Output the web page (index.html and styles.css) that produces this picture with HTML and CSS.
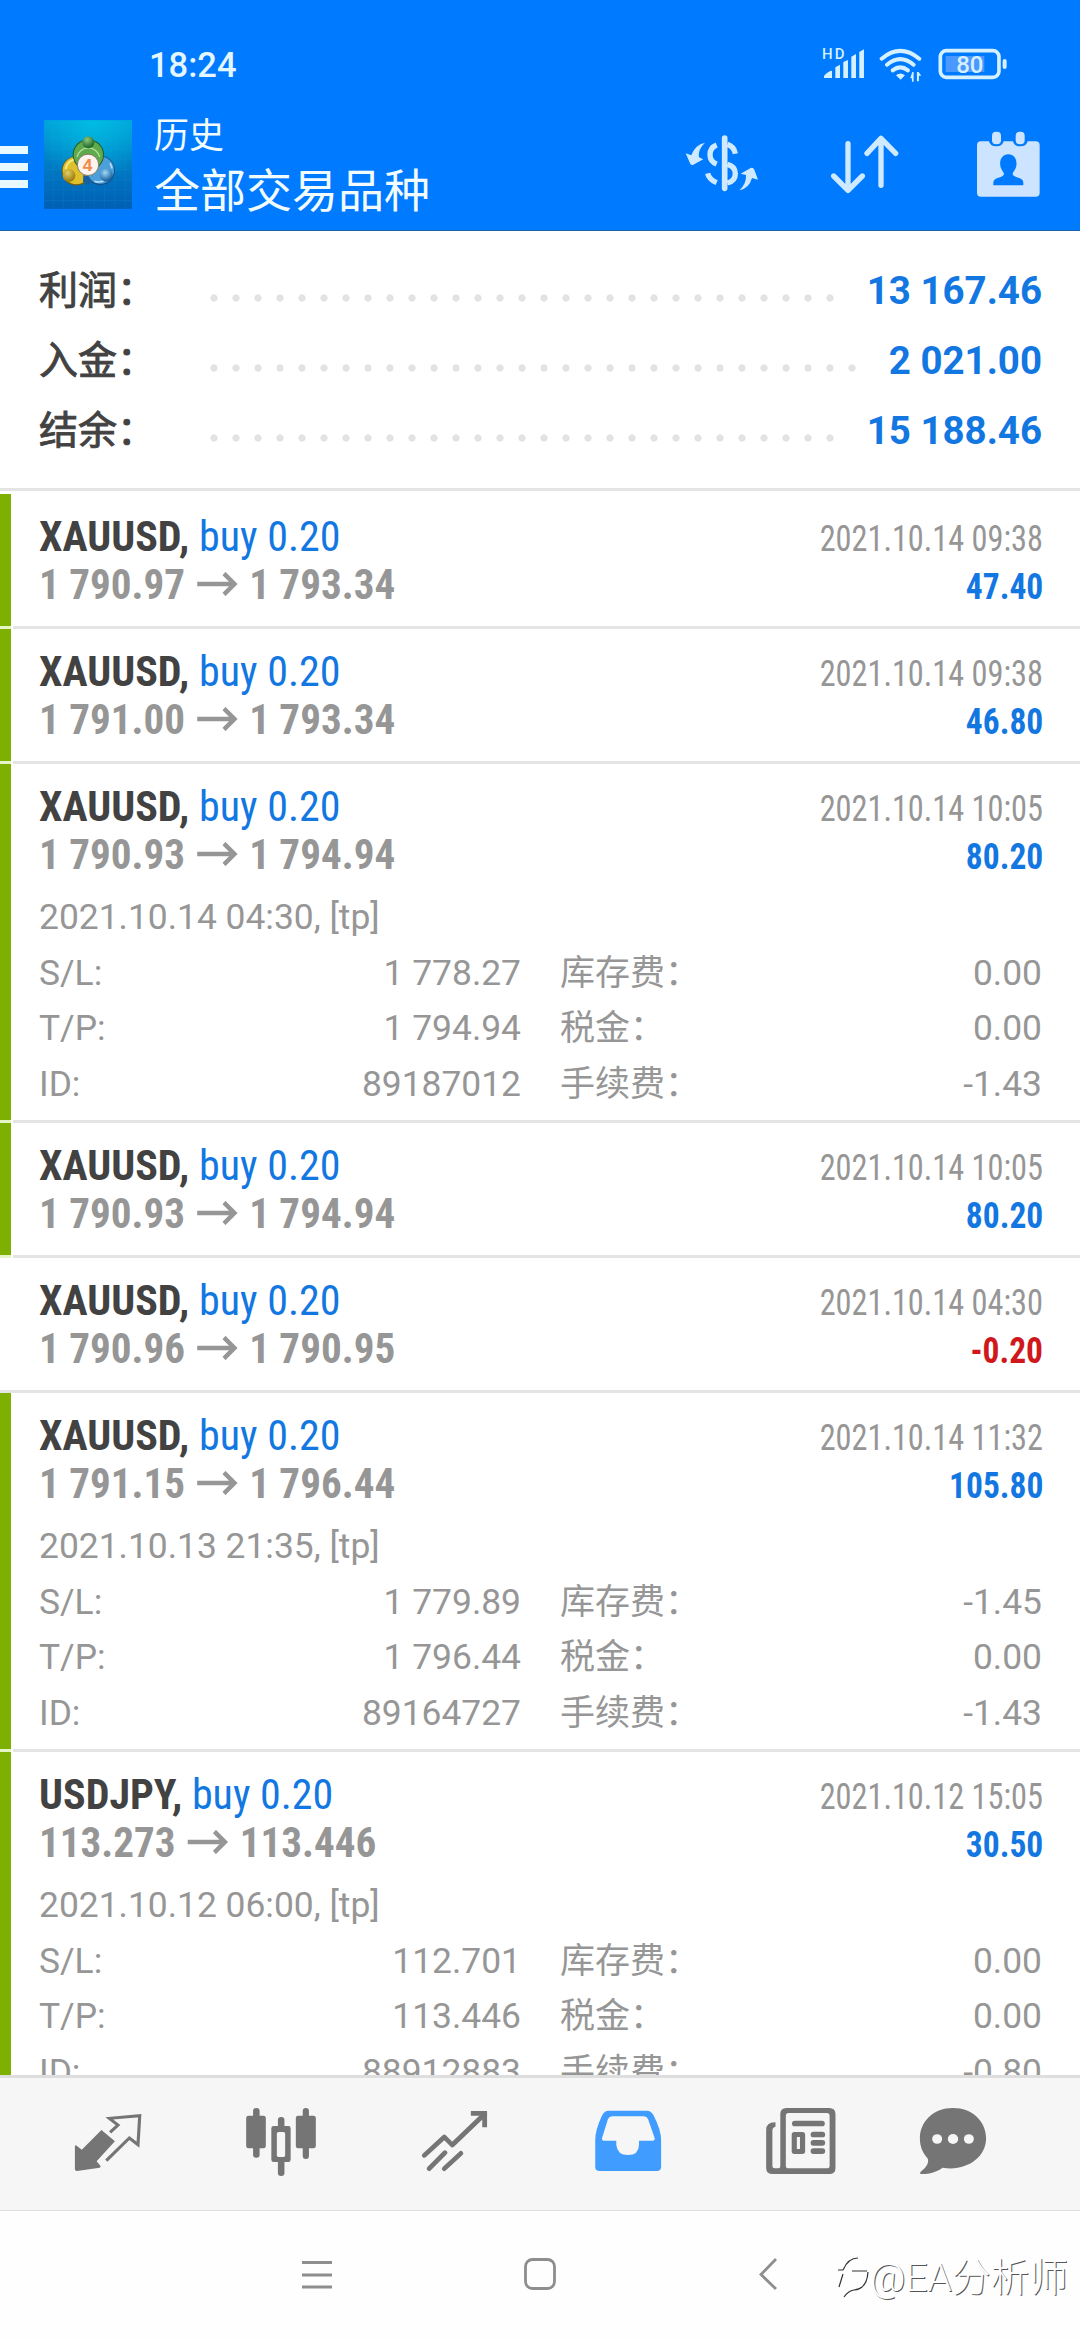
FILE: index.html
```html
<!DOCTYPE html>
<html lang="zh-CN">
<head>
<meta charset="utf-8">
<title>历史</title>
<link rel="stylesheet" href="styles.css">
</head>
<body>
<div class="screen">
  <header class="header">
    <div class="status">
      <span class="clock">18:24</span>
      <div class="status-icons">
        <svg class="signal" viewBox="546 138 130 108">
          <text x="546" y="177" font-size="45" font-weight="500" textLength="68">HD</text>
          <path d="M552 234v-6q10-14 24-16v22zM586 234v-32l14-8v40zM610 234v-48l14-6v54zM634 234v-64l14-8v72zM658 234v-78l14-8v86z"/>
        </svg>
        <svg class="wifi" viewBox="716 138 134 108">
          <g fill="none" stroke="#d5f1ff" stroke-width="12" stroke-linecap="round">
            <path d="M727 176q56-47 113 0"/><path d="M743 194q40-33 80 0"/><path d="M760 211q23-18 46 0"/>
          </g>
          <path d="M770 226q13-11 27 0l-13 13zM823 216v29h-5v-10h-5l6-19zM833 216h5l8 11h-7v17h-6z"/>
        </svg>
        <svg class="battery" viewBox="892 138 208 108">
          <rect x="915" y="168" width="116" height="48" fill="#4b98ff"/>
          <rect x="899" y="152" width="176" height="80" rx="18" fill="none" stroke="#d5f1ff" stroke-width="11"/>
          <rect x="1086" y="177" width="12" height="30" rx="6"/>
          <text x="947" y="219" font-size="72" font-weight="500" textLength="81">80</text>
        </svg>
      </div>
    </div>
    <div class="appbar">
      <svg class="menu" viewBox="0 0 28 42"><path d="M0 0h28v8H0zM0 17h28v8H0zM0 34h28v8H0z"/></svg>
      <svg class="logo" viewBox="132 31 264 266">
        <defs>
          <linearGradient id="sky" x1="0" y1="0" x2="0" y2="1"><stop offset="0" stop-color="#009fd8"/><stop offset=".5" stop-color="#007bc4"/><stop offset="1" stop-color="#005fb4"/></linearGradient>
          <radialGradient id="shine" cx=".55" cy="0" r=".7"><stop offset="0" stop-color="#00c4e4" stop-opacity=".8"/><stop offset="1" stop-color="#00c4e4" stop-opacity="0"/></radialGradient>
          <radialGradient id="green" cx=".4" cy=".3" r=".7"><stop offset="0" stop-color="#8cc77c"/><stop offset="1" stop-color="#1a6428"/></radialGradient>
          <radialGradient id="gold" cx=".4" cy=".3" r=".7"><stop offset="0" stop-color="#e2cf68"/><stop offset="1" stop-color="#98780a"/></radialGradient>
          <radialGradient id="azure" cx=".4" cy=".3" r=".7"><stop offset="0" stop-color="#9fd8f6"/><stop offset="1" stop-color="#125c9a"/></radialGradient>
        </defs>
        <rect x="132" y="31" width="264" height="266" fill="url(#sky)"/>
        <rect x="132" y="31" width="264" height="266" fill="url(#shine)"/>
        <path d="M159 31v266M190 31v266M221 31v266M252 31v266M283 31v266M314 31v266M345 31v266M376 31v266M132 55h264M132 86h264M132 117h264M132 148h264M132 179h264M132 210h264M132 241h264M132 272h264" stroke="#42a9e0" stroke-opacity=".16" stroke-width="2"/>
        <circle cx="229" cy="183" r="44" fill="#6f5d12"/>
        <circle cx="301" cy="182" r="44" fill="#174f86"/>
        <circle cx="229" cy="182" r="41" fill="#dfc02a"/>
        <circle cx="301" cy="181" r="41" fill="#4d9fdb"/>
        <circle cx="265" cy="135" r="47" fill="#1f5f2a"/>
        <circle cx="265" cy="135" r="44" fill="#5fab4c"/>
        <path d="M231 141a35 35 0 0 1 68 0" fill="none" stroke="#b9e0a4" stroke-width="4"/>
        <path d="M197 178a34 34 0 0 1 24-28" fill="none" stroke="#f6e88a" stroke-width="6"/>
        <path d="M283 214a36 36 0 0 0 30-2M330 160a34 34 0 0 1 6 16" fill="none" stroke="#b5defa" stroke-width="5"/>
        <path d="M250 196l14 0 12 18-12 12-15-10z" fill="#17609f"/>
        <circle cx="265" cy="97" r="18" fill="url(#green)"/>
        <circle cx="207" cy="197" r="19" fill="url(#gold)"/>
        <circle cx="319" cy="196" r="19" fill="url(#azure)"/>
        <circle cx="264" cy="165" r="32" fill="#fff3ee" stroke="#7d7b66" stroke-width="3"/>
        <text x="248" y="185" class="logo-digit">4</text>
      </svg>
      <div class="titles">
        <div class="title-small">历史</div>
        <div class="title-large">全部交易品种</div>
      </div>
      <div class="actions">
        <svg class="action" viewBox="126 384 240 216">
          <g fill="none" stroke="#cfeaff" stroke-width="16">
            <path d="M254 414v151" stroke-width="17" stroke-linecap="round"/>
            <path d="M230 435q-20 8-20 29 0 20 20 28M203 520q4 18 27 28"/>
            <path d="M262 433q20 6 24 28M262 493q24 6 24 28t-24 28" stroke-linecap="butt"/>
          </g>
          <path fill="#cfeaff" d="M195 428q-22 20-18 44l13 6-30 16q-7 4-10-4l-13-30 17 6q11-32 41-38zM298 571q22-20 20-46l-16-4 30-17q7-3 11 5l11 30-18-5q-9 32-38 37z"/>
        </svg>
        <svg class="action" viewBox="556 384 240 216">
          <g fill="none" stroke="#cfeaff" stroke-width="16" stroke-linecap="round" stroke-linejoin="round">
            <path d="M625 431v140M582 528l43 43 43-43M724 556V415M682 460l42-45 44 45"/>
          </g>
        </svg>
        <svg class="action" viewBox="986 384 240 216">
          <path fill="#cce4ff" d="M1022 424h24q3 15 22 15t22-15h28q3 15 22 15t22-15h24q12 0 12 12v142q0 12-12 12h-164q-12 0-12-12V436q0-12 12-12z"/>
          <rect x="1055" y="395" width="27" height="38" rx="12" fill="#cce4ff"/>
          <rect x="1126" y="395" width="27" height="38" rx="12" fill="#cce4ff"/>
          <path fill="#007aff" d="M1104 463c18 0 27 16 24 34-2 13-11 18-11 26 4 12 32 8 32 25v8h-90v-8c0-17 28-13 32-25 0-8-9-13-11-26-3-18 6-34 24-34z"/>
        </svg>
      </div>
    </div>
  </header>

  <main class="content">
    <section class="summary">
      <div class="sum-row"><span class="sum-label">利润：</span><span class="dots"></span><span class="sum-value">13 167.46</span></div>
      <div class="sum-row"><span class="sum-label">入金：</span><span class="dots dots-long"></span><span class="sum-value">2 021.00</span></div>
      <div class="sum-row"><span class="sum-label">结余：</span><span class="dots"></span><span class="sum-value">15 188.46</span></div>
    </section>

    <section class="deals">
      <article class="deal tp">
        <div class="line"><span class="symbol">XAUUSD, <span class="side">buy 0.20</span></span><time>2021.10.14 09:38</time></div>
        <div class="line"><span class="prices">1 790.97<svg class="arrow" viewBox="0 0 42 24"><path d="M0 12h39M28 1.5l11 10.5-11 10.5"/></svg>1 793.34</span><span class="profit">47.40</span></div>
      </article>
      <article class="deal tp">
        <div class="line"><span class="symbol">XAUUSD, <span class="side">buy 0.20</span></span><time>2021.10.14 09:38</time></div>
        <div class="line"><span class="prices">1 791.00<svg class="arrow" viewBox="0 0 42 24"><path d="M0 12h39M28 1.5l11 10.5-11 10.5"/></svg>1 793.34</span><span class="profit">46.80</span></div>
      </article>
      <article class="deal tp open">
        <div class="line"><span class="symbol">XAUUSD, <span class="side">buy 0.20</span></span><time>2021.10.14 10:05</time></div>
        <div class="line"><span class="prices">1 790.93<svg class="arrow" viewBox="0 0 42 24"><path d="M0 12h39M28 1.5l11 10.5-11 10.5"/></svg>1 794.94</span><span class="profit">80.20</span></div>
        <div class="details">
          <div class="opened">2021.10.14 04:30, [tp]</div>
          <div class="pair"><span>S/L:</span><span>1 778.27</span></div><div class="pair"><span class="zh">库存费：</span><span>0.00</span></div>
          <div class="pair"><span>T/P:</span><span>1 794.94</span></div><div class="pair"><span class="zh">税金：</span><span>0.00</span></div>
          <div class="pair"><span>ID:</span><span>89187012</span></div><div class="pair"><span class="zh">手续费：</span><span>-1.43</span></div>
        </div>
      </article>
      <article class="deal tp">
        <div class="line"><span class="symbol">XAUUSD, <span class="side">buy 0.20</span></span><time>2021.10.14 10:05</time></div>
        <div class="line"><span class="prices">1 790.93<svg class="arrow" viewBox="0 0 42 24"><path d="M0 12h39M28 1.5l11 10.5-11 10.5"/></svg>1 794.94</span><span class="profit">80.20</span></div>
      </article>
      <article class="deal">
        <div class="line"><span class="symbol">XAUUSD, <span class="side">buy 0.20</span></span><time>2021.10.14 04:30</time></div>
        <div class="line"><span class="prices">1 790.96<svg class="arrow" viewBox="0 0 42 24"><path d="M0 12h39M28 1.5l11 10.5-11 10.5"/></svg>1 790.95</span><span class="profit loss">-0.20</span></div>
      </article>
      <article class="deal tp open">
        <div class="line"><span class="symbol">XAUUSD, <span class="side">buy 0.20</span></span><time>2021.10.14 11:32</time></div>
        <div class="line"><span class="prices">1 791.15<svg class="arrow" viewBox="0 0 42 24"><path d="M0 12h39M28 1.5l11 10.5-11 10.5"/></svg>1 796.44</span><span class="profit">105.80</span></div>
        <div class="details">
          <div class="opened">2021.10.13 21:35, [tp]</div>
          <div class="pair"><span>S/L:</span><span>1 779.89</span></div><div class="pair"><span class="zh">库存费：</span><span>-1.45</span></div>
          <div class="pair"><span>T/P:</span><span>1 796.44</span></div><div class="pair"><span class="zh">税金：</span><span>0.00</span></div>
          <div class="pair"><span>ID:</span><span>89164727</span></div><div class="pair"><span class="zh">手续费：</span><span>-1.43</span></div>
        </div>
      </article>
      <article class="deal tp open">
        <div class="line"><span class="symbol">USDJPY, <span class="side">buy 0.20</span></span><time>2021.10.12 15:05</time></div>
        <div class="line"><span class="prices">113.273<svg class="arrow" viewBox="0 0 42 24"><path d="M0 12h39M28 1.5l11 10.5-11 10.5"/></svg>113.446</span><span class="profit">30.50</span></div>
        <div class="details">
          <div class="opened">2021.10.12 06:00, [tp]</div>
          <div class="pair"><span>S/L:</span><span>112.701</span></div><div class="pair"><span class="zh">库存费：</span><span>0.00</span></div>
          <div class="pair"><span>T/P:</span><span>113.446</span></div><div class="pair"><span class="zh">税金：</span><span>0.00</span></div>
          <div class="pair"><span>ID:</span><span>88912883</span></div><div class="pair"><span class="zh">手续费：</span><span>-0.80</span></div>
        </div>
      </article>
    </section>
  </main>

  <nav class="tabs">
    <svg viewBox="199 192 232 240" preserveAspectRatio="none">
      <path d="M296 270l39 34-53 60 12 15-3 4-66 10q-6 0-6-6v-67q0-6 5-3l15 12z"/>
      <path d="M321 277l23-22-25-20 88-8-5 87-25-20-67 68" fill="none" stroke="#757575" stroke-width="9"/>
    </svg>
    <svg viewBox="700 192 232 240" preserveAspectRatio="none">
      <rect x="715" y="227" width="57" height="98" rx="7"/><rect x="859" y="227" width="58" height="98" rx="7"/>
      <rect x="735" y="204" width="19" height="149" rx="9"/><rect x="879" y="204" width="18" height="153" rx="9"/>
      <rect x="807" y="231" width="19" height="177" rx="9"/><rect x="788" y="258" width="56" height="108" rx="7"/>
      <rect x="804" y="276" width="24" height="75" rx="5" fill="#f6f6f6"/>
    </svg>
    <svg viewBox="1204 192 232 240" preserveAspectRatio="none">
      <g fill="none" stroke="#757575" stroke-width="14" stroke-linejoin="round">
        <path d="M1231 346l58-55 23 24 94-93" stroke-linecap="round"/>
        <path d="M1366 220h40v42" stroke-linejoin="miter"/>
        <path d="M1245 386l46-48M1289 386l48-46" stroke-linecap="round"/>
      </g>
    </svg>
    <svg class="active" viewBox="138 192 232 240" preserveAspectRatio="none">
      <path fill-rule="evenodd" d="M198 212h110q14 0 20 14 22 44 22 74v80q0 13-13 13H172q-13 0-13-13v-80q0-30 20-74 6-14 19-14zM208 229q-9 0-12 8l-17 56q-2 8 5 9h36v12q3 31 34 31t32-31v-12h39q9-1 6-9l-19-56q-3-8-12-8z"/>
    </svg>
    <svg viewBox="642 192 232 240" preserveAspectRatio="none">
      <path fill-rule="evenodd" d="M684 247v13q-9 2-9 12v106q0 7 7 7h11q5 0 5-7V222q0-18 18-18h124q18 0 18 18v162q0 18-18 18H676q-19 0-19-18V270q0-24 27-23zM722 219q-8 0-8 8v150q0 8 8 8h111q8 0 8-8V227q0-8-8-8z"/>
      <rect x="732" y="242" width="95" height="17" rx="8"/>
      <path fill-rule="evenodd" d="M739 276h23q8 0 8 8v50q0 8-8 8h-23q-8 0-8-8v-50q0-8 8-8zM746 291v36h9v-36z"/>
      <rect x="786" y="275" width="42" height="17" rx="8"/><rect x="786" y="300" width="42" height="17" rx="8"/><rect x="786" y="325" width="42" height="17" rx="8"/>
    </svg>
    <svg viewBox="1083 192 232 240" preserveAspectRatio="none">
      <path d="M1199 204c56 0 96 40 96 91 0 60-60 100-126 88-17 12-36 19-62 19q-7-1 0-8c17-15 22-25 19-38-16-18-23-37-23-61 0-51 40-91 96-91z"/>
      <g fill="#f6f6f6"><circle cx="1153" cy="297" r="14.500"/><circle cx="1199" cy="297" r="15"/><circle cx="1245" cy="297" r="14.500"/></g>
    </svg>
  </nav>

  <footer class="system">
    <svg class="sys-recent" viewBox="0 0 34 34"><path d="M2 4.500h30M2 17h30M2 29h30"/></svg>
    <svg class="sys-home" viewBox="0 0 34 34"><rect x="1.500" y="1.500" width="29" height="29" rx="7"/></svg>
    <svg class="sys-back" viewBox="0 0 34 34"><path d="M24 1L9 16.500 24 31"/></svg>
    <div class="watermark">
      <svg viewBox="0 0 34 48">
        <g fill="none" stroke="#333" stroke-width="1.200"><path d="M2 15h5Q12 3 22 3M3 32l4-13M16 16h15M32 17Q31 34 18 35 12 36 8 42"/></g>
      </svg><span>@EA分析师</span>
    </div>
  </footer>
</div>
</body>
</html>
```
FILE: styles.css
```css
* { box-sizing: border-box; }
body {
  margin: 0;
  background: #fff;
  font-family: Roboto, "Noto Sans CJK SC", sans-serif;
  color: #969696;
}
svg { display: block; flex: none; }
.screen {
  width: 1080px;
  height: 2340px;
  display: flex;
  flex-direction: column;
  overflow: hidden;
}

/* Header */
.header {
  flex: none;
  height: 231px;
  background: #007aff;
  border-bottom: 1px solid #1a62a8;
  color: #f2fcff;
}
.status {
  height: 96px;
  padding: 32px 73px 0 149px;
  display: flex;
  justify-content: space-between;
}
.clock {
  font-size: 34.500px;
  line-height: 66px;
  height: 64px;
  font-weight: 500;
  color: #e4f6ff;
}
.status-icons { display: flex; gap: 13px; padding-top: 14px; fill: #d5f1ff; }
.signal { width: 43.300px; height: 36px; }
.wifi { width: 44.600px; height: 36px; }
.battery { width: 69.300px; height: 36px; margin-left: 2px; }
.appbar { height: 134px; display: flex; align-items: flex-start; }
.menu { width: 28px; height: 42px; margin-top: 50px; fill: #e8f9ff; }
.logo { width: 88px; height: 89px; margin: 24px 0 0 16px; }
.logo-digit { font: 700 52px "Liberation Sans", sans-serif; fill: #f08a4b; }
.titles { margin-left: 22px; padding-top: 12px; font-family: "Noto Sans CJK SC", sans-serif; }
.title-small { font-size: 35px; line-height: 49px; }
.title-large { font-size: 46px; line-height: 60px; }
.actions { display: flex; gap: 63.300px; margin-left: auto; padding: 32px 31.300px 0 0; }
.action { width: 80px; height: 72px; }

/* Balance summary */
.content { flex: 1; min-height: 0; overflow: hidden; }
.summary { height: 260px; padding: 25px 38px 0 39px; border-bottom: 3px solid #e4e4e4; }
.sum-row { height: 70px; line-height: 70px; display: flex; align-items: center; }
.sum-label {
  width: 163.500px;
  font-size: 39px;
  color: #424242;
  -webkit-text-stroke: .9px #424242;
}
.dots {
  width: 638px;
  height: 22px;
  margin-top: 13px;
  background: radial-gradient(circle at center, #e2e2e2 3.200px, transparent 4px) 0 0 / 22px 22px;
}
.dots-long { width: 660px; }
.sum-value { margin-left: auto; font-size: 38.500px; font-weight: 700; color: #1377e2; white-space: nowrap; }

/* Deals */
.deals { padding-top: 3px; }
.deal {
  height: 135px;
  padding: 18px 37px 0 39px;
  border-bottom: 3px solid #e4e4e4;
  font-family: "Roboto Condensed", sans-serif;
}
.deal.open { height: 359px; }
.deal.tp {
  background: linear-gradient(#7db000, #7db000) 0 0 / 11px 100% no-repeat;
  border-image: linear-gradient(to right, #e6f5c4 11px, #fff 11px, #fff 13px, #e4e4e4 13px) 0 0 3 0;
}
.line { height: 48px; line-height: 48px; display: flex; justify-content: space-between; align-items: baseline; white-space: nowrap; }
.symbol { font-size: 43px; font-weight: 700; color: #424242; transform: scaleX(.977); transform-origin: left; }
.side { font-weight: 400; color: #1377e2; }
.line time { font-size: 36px; transform: scaleX(.897); transform-origin: right; }
.prices { font-size: 43px; font-weight: 700; display: flex; align-items: baseline; transform: scaleX(.956); transform-origin: left; }
.arrow { width: 43px; height: 24px; margin: 0 12px; align-self: center; fill: none; stroke: #969696; stroke-width: 4.500; }
.profit { font-size: 36px; font-weight: 700; color: #1377e2; transform: scaleX(.93); transform-origin: right; }
.profit.loss { color: #d0181c; }
.details {
  margin-top: 12px;
  display: grid;
  grid-template-columns: 482px 482px;
  column-gap: 39px;
  grid-auto-rows: 55.500px;
  line-height: 55.500px;
  font-family: Roboto, "Noto Sans CJK SC", sans-serif;
  font-size: 35.400px;
}
.opened { grid-column: 1 / -1; }
.pair { display: flex; justify-content: space-between; align-items: baseline; }
.zh { font-size: 35px; }

/* Tab bar */
.tabs {
  flex: none;
  height: 136px;
  display: grid;
  grid-template-columns: repeat(5, 173.200px) 131px;
  padding: 26px 0 0 21.700px;
  justify-items: center;
  border-top: 3px solid #dedede;
  border-bottom: 1px solid #dedede;
  background: #f6f6f6;
  fill: #757575;
}
.tabs svg { width: 80px; height: 80px; }
.tabs .active { fill: #409cff; }

/* System navigation */
.system {
  flex: none;
  height: 129px;
  position: relative;
  display: flex;
  align-items: flex-start;
  padding: 47px 0 0 300px;
  background: #fefefe;
  fill: none;
  stroke: #8e8e8e;
  stroke-width: 2.800;
}
.system svg { width: 34px; height: 34px; }
.sys-home { margin-left: 190px; }
.sys-back { margin-left: 194px; }
.watermark {
  position: absolute;
  left: 836px;
  top: 42px;
  display: flex;
  font: 300 38.800px/50px Roboto, "Noto Sans CJK SC", sans-serif;
  color: #fff;
  text-shadow: 1px 1px 0 #555;
  white-space: nowrap;
}
.system .watermark svg { width: 34px; height: 48px; margin-top: 2px; }
```
